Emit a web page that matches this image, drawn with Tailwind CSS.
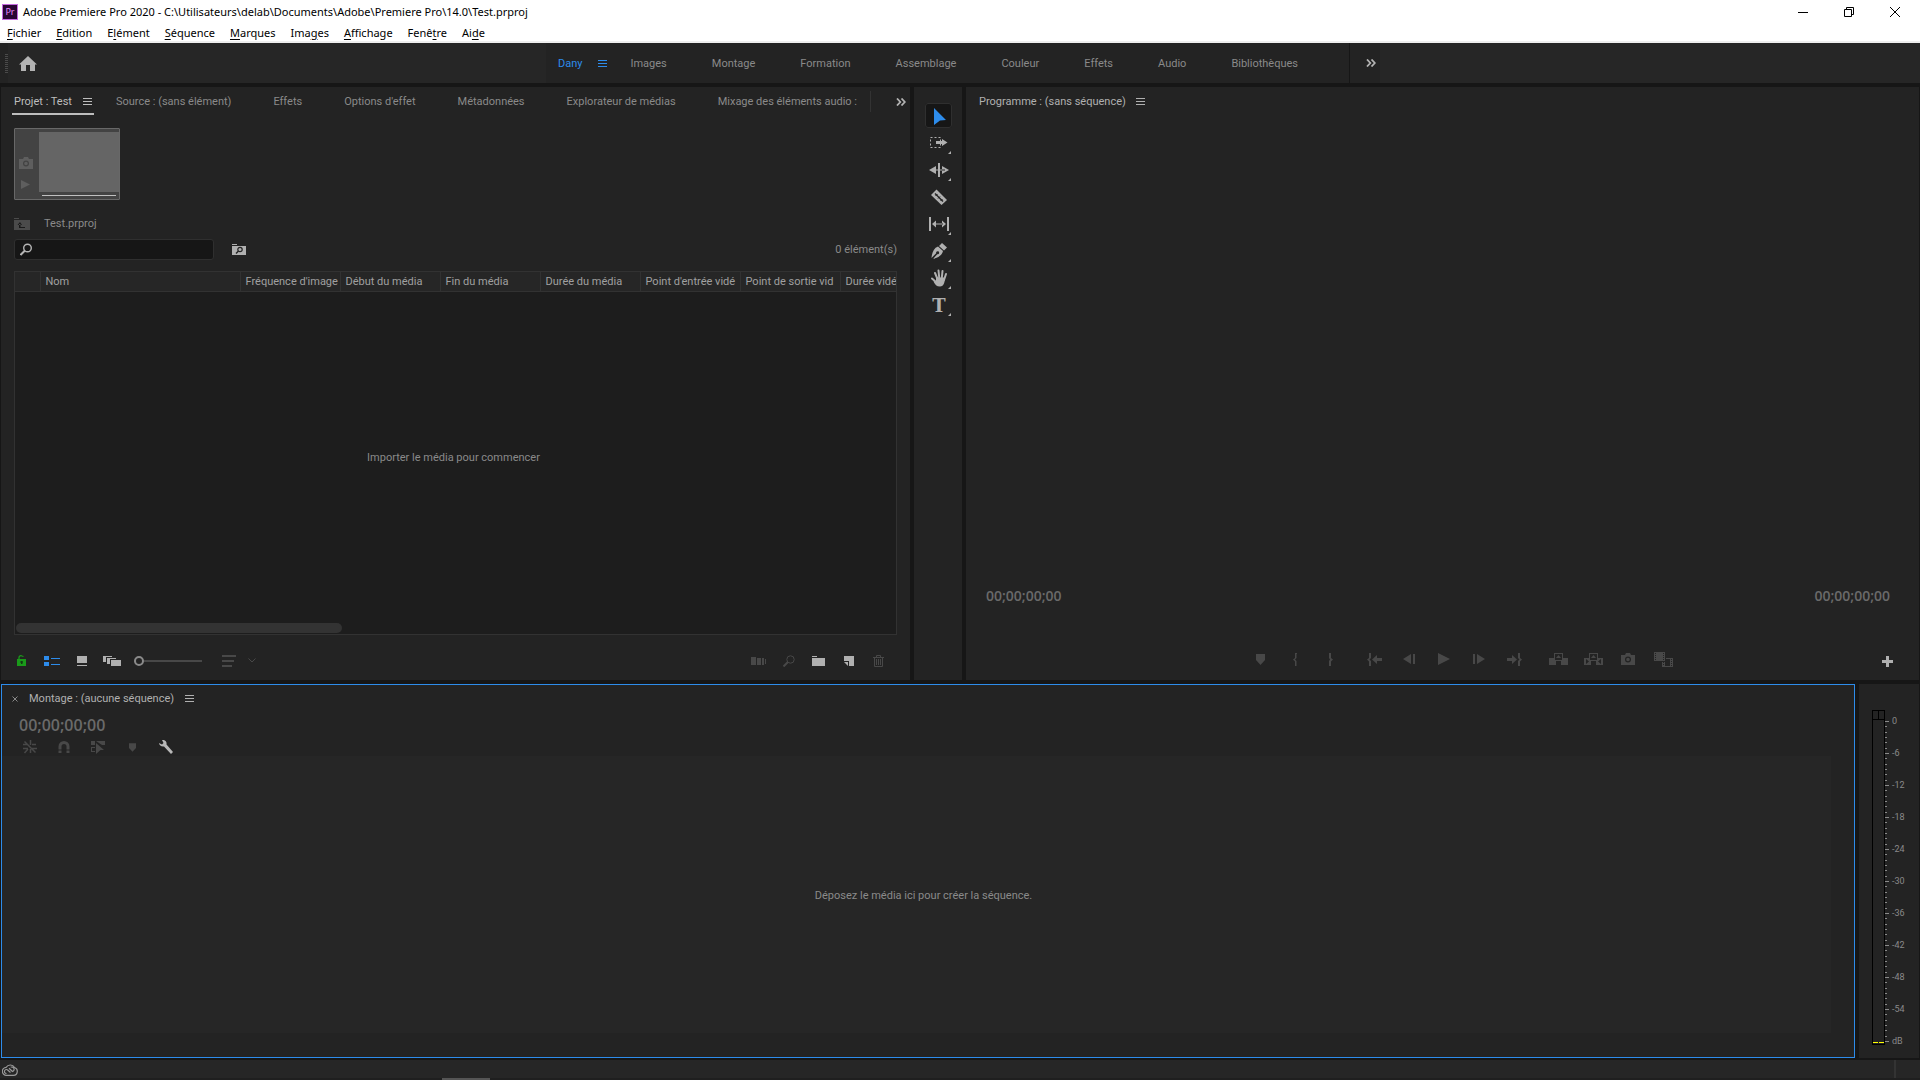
<!DOCTYPE html>
<html lang="fr">

<head>
    <meta charset="UTF-8">
    <meta name="viewport" content="width=device-width, initial-scale=1.0">
    <title>Adobe Premiere Pro 2020</title>
    <script src="https://cdn.jsdelivr.net/npm/@tailwindcss/browser@4"></script>
</head>

<body class="flex h-screen flex-col overflow-hidden bg-[#161616] font-['Roboto',sans-serif] text-[11px] leading-4 text-[#8a8a8a]">

    <!-- Symboles partagés -->
    <svg class="hidden">
        <symbol id="menu" viewBox="0 0 9 7"><path d="M0 0h9v1H0zM0 3h9v1H0zM0 6h9v1H0z" fill="currentColor" /></symbol>
        <symbol id="more" viewBox="0 0 10 8"><path d="M1 .5L4.300 4 1 7.500M5.500 .5L8.800 4 5.500 7.500" fill="none" stroke="currentColor" stroke-width="1.800" /></symbol>
        <symbol id="camera" viewBox="0 0 14 12"><path fill-rule="evenodd" d="M0 2h4l1-2h4l1 2h4v10H0zM7 3.500a3 3 0 1 0 0 6 3 3 0 0 0 0-6zm0 1.200a1.800 1.800 0 1 1 0 3.600 1.800 1.800 0 0 1 0-3.600z" fill="currentColor" /></symbol>
        <symbol id="marker" viewBox="0 0 9 11"><path d="M0 0h9v6L4.500 11 0 6z" fill="currentColor" /></symbol>
    </svg>

    <!-- Barre de titre et menus -->
    <header class="h-[43px] shrink-0 border-b-2 border-[#eeeeee] bg-white font-['Noto_Sans',sans-serif] text-black">
        <div class="flex h-[23px] items-center pl-[2px]">
            <div class="flex h-4 w-4 items-center justify-center border border-[#c56be0] bg-[#2a0634] text-[9px] leading-none text-[#e58cff]">Pr</div>
            <h1 class="ml-[5px] flex-1">Adobe Premiere Pro 2020 - C:\Utilisateurs\delab\Documents\Adobe\Premiere Pro\14.0\Test.prproj</h1>
            <div class="flex items-center pr-5">
                <button aria-label="Réduire" class="w-[46px]"><svg class="ml-auto" width="10" height="10"><path d="M0 5h10v1H0z" /></svg></button>
                <button aria-label="Restaurer" class="w-[46px]"><svg class="ml-auto" width="10" height="10" fill="none" stroke="#000"><path d="M.5 2.500h7v7h-7zM2.500 2.500v-2h7v7h-2" /></svg></button>
                <button aria-label="Fermer" class="w-[46px]"><svg class="ml-auto" width="10" height="10" stroke="#000"><path d="M0 0l10 10M10 0L0 10" /></svg></button>
            </div>
        </div>
        <nav class="flex h-[18px] items-center gap-[15px] pt-px pl-[7px] underline-offset-2">
            <button><u>F</u>ichier</button>
            <button><u>E</u>dition</button>
            <button>E<u>l</u>ément</button>
            <button><u>S</u>équence</button>
            <button><u>M</u>arques</button>
            <button>Ima<u>g</u>es</button>
            <button><u>A</u>ffichage</button>
            <button>Fenê<u>t</u>re</button>
            <button>Ai<u>d</u>e</button>
        </nav>
    </header>

    <!-- Espaces de travail -->
    <div class="flex h-10 shrink-0 bg-[#262626]">
        <div class="flex w-[546px] items-center">
            <div class="flex h-full w-2 items-center justify-end bg-[#232323]">
                <svg width="3" height="19" fill="#4a4a4a"><path d="M0 0h3v1H0zM0 2h3v1H0zM0 4h3v1H0zM0 6h3v1H0zM0 8h3v1H0zM0 10h3v1H0zM0 12h3v1H0zM0 14h3v1H0zM0 16h3v1H0zM0 18h3v1H0z" /></svg>
            </div>
            <button aria-label="Accueil" class="ml-[11px]"><svg width="18" height="15" fill="#b3b3b3"><path d="M9 0l9 8.500h-2V15h-5V9H7v6H2V8.500H0z" /></svg></button>
        </div>
        <nav class="flex w-[804px] items-center gap-[45px] border-r border-[#161616] bg-[#232323] pt-px pl-3">
            <button class="-mr-[22px] flex items-center gap-4 text-[#2d8ceb]">Dany <svg width="9" height="7"><use href="#menu" /></svg></button>
            <button>Images</button>
            <button>Montage</button>
            <button>Formation</button>
            <button>Assemblage</button>
            <button>Couleur</button>
            <button>Effets</button>
            <button>Audio</button>
            <button>Bibliothèques</button>
        </nav>
        <button aria-label="Autres espaces" class="w-[30px] bg-[#232323] pl-4 text-[#b3b3b3]"><svg width="10" height="8"><use href="#more" /></svg></button>
    </div>

    <main class="flex min-h-0 flex-1 flex-col gap-1 px-px pt-1 pb-[2px]">
        <div class="flex min-h-0 flex-[593] gap-1">

            <!-- Panneau Projet -->
            <section class="flex min-w-0 flex-[883] flex-col bg-[#232323] px-[13px]">
                <div class="flex h-[29px] items-center justify-between">
                    <div class="flex items-center gap-[42px] whitespace-nowrap">
                        <button class="-mr-5 -ml-[2px] mt-[2px] flex items-center gap-[11px] border-b-2 border-[#bdbdbd] pt-[3px] pr-[2px] pb-[3px] pl-[2px] text-[#bdbdbd]">Projet : Test <svg width="9" height="7"><use href="#menu" /></svg></button>
                        <button>Source : (sans élément)</button>
                        <button>Effets</button>
                        <button>Options d'effet</button>
                        <button>Métadonnées</button>
                        <button>Explorateur de médias</button>
                        <button>Mixage des éléments audio :</button>
                    </div>
                    <div class="-mr-[9px] flex items-center gap-[25px]">
                        <div class="h-[21px] w-px bg-[#333333]"></div>
                        <button aria-label="Autres panneaux" class="text-[#b3b3b3]"><svg width="10" height="8"><use href="#more" /></svg></button>
                    </div>
                </div>

                <!-- Aperçu -->
                <div class="mt-3 flex h-[72px] w-[106px] shrink-0 rounded-[1px] border border-[#686868] bg-[#434343] text-[#5e5e5e]">
                    <div class="flex w-6 flex-col gap-[11px] pt-7 pl-1">
                        <svg width="14" height="12"><use href="#camera" /></svg>
                        <svg class="ml-[2px]" width="9" height="9"><path d="M0 0l9 4.500L0 9z" fill="currentColor" /></svg>
                    </div>
                    <div class="flex flex-1 flex-col pt-[3px]">
                        <div class="h-[60px] bg-[#656565]"></div>
                        <div class="mx-[3px] mt-[3px] h-px bg-[#c0c0c0]"></div>
                    </div>
                </div>

                <div class="mt-4 flex h-4 shrink-0 items-center gap-[14px]">
                    <svg width="16" height="12"><path d="M0 0h5v1H0zM0 2h16v10H0z" fill="#4b4b4b" /><path d="M6 4L3.500 7H8zM5 6h1.500v3H11v1H5z" fill="#1a1a1a" /></svg>
                    <span>Test.prproj</span>
                </div>
                <div class="mt-[7px] flex h-[21px] shrink-0 items-center">
                    <label class="flex h-full w-[200px] items-center gap-1 rounded-[3px] border border-[#2f2f2f] bg-[#161616] px-[5px]">
                        <svg width="13" height="13" fill="none" stroke="#b5b5b5" stroke-width="1.400"><circle cx="7.500" cy="5" r="3.800" /><path d="M5 7.500L.5 12" stroke-width="2" /></svg>
                        <input type="text" aria-label="Rechercher" class="min-w-0 flex-1 bg-transparent text-[#b5b5b5] outline-none">
                    </label>
                    <button aria-label="Créer un chutier de recherche" class="ml-[18px]"><svg width="14" height="11"><path d="M0 0h5v1H0zM0 2h14v9H0z" fill="#b0b0b0" /><circle cx="8" cy="5.500" r="2.200" fill="none" stroke="#232323" stroke-width="1.200" /><path d="M6.500 7L4 9.500" stroke="#232323" stroke-width="1.500" /></svg></button>
                    <span class="ml-auto pt-px">0 élément(s)</span>
                </div>

                <!-- Liste des éléments -->
                <div class="mt-[11px] flex min-h-0 flex-1 flex-col overflow-hidden border border-[#323232] bg-[#1d1d1d]">
                    <table class="w-[925px] shrink-0 table-fixed border-collapse text-left text-[#a0a0a0]">
                        <thead>
                            <tr class="h-[19px] border-b border-[#323232] bg-[#262626] *:overflow-hidden *:border-r *:border-[#323232] *:pt-[2px] *:pl-[5px] *:font-normal *:whitespace-nowrap">
                                <td class="w-[25px]"></td>
                                <th scope="col" class="w-[200px]">Nom</th>
                                <th scope="col" class="w-[100px]">Fréquence d'image</th>
                                <th scope="col" class="w-[100px]">Début du média</th>
                                <th scope="col" class="w-[100px]">Fin du média</th>
                                <th scope="col" class="w-[100px]">Durée du média</th>
                                <th scope="col" class="w-[100px]">Point d'entrée vidé</th>
                                <th scope="col" class="w-[100px]">Point de sortie vid</th>
                                <th scope="col">Durée vidéo</th>
                            </tr>
                        </thead>
                    </table>
                    <div class="flex flex-1 items-center justify-center pt-[2px] pr-1">Importer le média pour commencer</div>
                    <div class="mb-px ml-px h-[10px] w-[37%] rounded-full bg-[#333333]"></div>
                </div>

                <div class="flex h-[45px] shrink-0 items-center pt-[6px] pl-[3px]">
                    <button aria-label="Verrouiller"><svg width="9" height="11"><path d="M2 4V2.500a2 2 0 0 1 3-1.500l1.500.5" fill="none" stroke="#1a9a1a" stroke-width="1.300" /><path d="M0 4h9v7H0z" fill="#1a9a1a" /><path d="M4 6h1.500v3H4zM3 6.500h3v1H3z" fill="#123a12" /></svg></button>
                    <button aria-label="Liste" class="ml-[18px]"><svg width="16" height="10" fill="#2d8ceb"><path d="M0 0h5v4H0zM0 6h5v4H0zM7 2h9v1H7zM7 8h9v1H7z" /></svg></button>
                    <button aria-label="Icônes" class="ml-[17px]"><svg width="10" height="10" fill="#b0b0b0"><path d="M0 0h10v7H0zM0 9h10v1H0z" /></svg></button>
                    <button aria-label="Forme libre" class="ml-4"><svg width="18" height="10" fill="#b0b0b0"><path d="M0 0h9v1H3v5H0zM4 2h9v1H7v5H4zM8 4h10v6H8z" /></svg></button>
                    <input type="range" min="0" max="100" value="0" aria-label="Taille des vignettes" class="ml-[13px] h-[11px] w-[68px] appearance-none bg-transparent [&::-webkit-slider-runnable-track]:h-[2px] [&::-webkit-slider-runnable-track]:bg-[#484848] [&::-webkit-slider-thumb]:-mt-1 [&::-webkit-slider-thumb]:h-[10px] [&::-webkit-slider-thumb]:w-[10px] [&::-webkit-slider-thumb]:appearance-none [&::-webkit-slider-thumb]:rounded-full [&::-webkit-slider-thumb]:border-2 [&::-webkit-slider-thumb]:border-[#8a8a8a] [&::-webkit-slider-thumb]:bg-[#232323]">
                    <button aria-label="Trier" class="ml-5 flex items-center gap-3"><svg width="14" height="12" fill="#484848"><path d="M0 0h14v2H0zM0 5h12v2H0zM0 10h10v2H0z" /></svg><svg width="8" height="5" fill="none" stroke="#484848"><path d="M.5 .5L4 4 7.500 .5" /></svg></button>
                    <div class="ml-auto flex items-center pr-[13px]">
                        <button aria-label="Automatiser"><svg width="15" height="8" fill="#484848"><path d="M0 0h5v8H0zM6 1h4v7H6zM11 1h2v7h-2zM14 2h1v5h-1z" /></svg></button>
                        <button aria-label="Rechercher" class="ml-[17px]"><svg width="12" height="12" fill="none" stroke="#484848"><circle cx="7.500" cy="4.500" r="3.700" /><path d="M5 7L.5 11.500" stroke-width="2" /></svg></button>
                        <button aria-label="Nouveau chutier" class="ml-[17px]"><svg width="13" height="10" fill="#b0b0b0"><path d="M0 0h5v1H0zM0 2h13v8H0z" /></svg></button>
                        <button aria-label="Nouvel élément" class="ml-[19px]"><svg width="10" height="10" fill="#b0b0b0"><path d="M0 0h10v10H5V5H0zM0 6h4v4z" /></svg></button>
                        <button aria-label="Supprimer" class="ml-[19px]"><svg width="11" height="12" fill="none" stroke="#484848"><path d="M0 2.500h11M3.500 2V.5h4V2M1.500 3v8.500h8V3M3.500 4v6M5.500 4v6M7.500 4v6" /></svg></button>
                    </div>
                </div>
            </section>

            <!-- Outils -->
            <section class="flex w-12 shrink-0 flex-col items-center gap-[2px] bg-[#232323] pt-4 text-[#b0b0b0]">
                <button aria-label="Sélection" class="rounded-[3px] bg-[#161616] outline -outline-offset-1 outline-[#2f2f2f]"><svg width="27" height="25"><path d="M9 5l12 12-6 .5L9 22z" fill="#2d8ceb" /></svg></button>
                <button aria-label="Sélection de piste en amont"><svg width="27" height="25" fill="currentColor"><path d="M5.500 7.500h10v10h-10z" fill="none" stroke="currentColor" stroke-dasharray="2 2" /><path d="M11 11h6V9l5.500 3.500L17 16v-2h-6z" /><path d="M26 21v3h-3z" /></svg></button>
                <button aria-label="Propagation"><svg width="27" height="25" fill="currentColor"><path d="M13 6h2v14h-2zM4 13l7-4v8zM24 13l-7-4v8zM8 12.500h12v1H8z" /><path d="M26 21v3h-3z" /></svg></button>
                <button aria-label="Cutter"><svg width="27" height="25" fill="currentColor"><path d="M11.500 5.500L22 16l-5.500 5L6 11z" /><path d="M10 9.500l8 8" stroke="#232323" stroke-width="1.400" /><path d="M10.500 12l2-2M13 14.500l2-2M15.500 17l2-2" stroke="#232323" /></svg></button>
                <button aria-label="Déplacer dessous"><svg width="27" height="25" fill="currentColor"><path d="M4 6h2v14H4zM22 6h2v14h-2zM7 13l4-3.500v7zM21 13l-4-3.500v7zM10 12.500h8v1h-8z" /><path d="M26 21v3h-3z" /></svg></button>
                <button aria-label="Plume"><svg width="27" height="25" fill="currentColor"><path d="M17 5l5 4.500-3 3L14 8zM13 8.500l5 4.500c-1 4-4 6.500-10 8l4.200-4.800a1.500 1.500 0 1 0-1-1L6.500 20C7 14 9 10 13 8.500z" /><path d="M26 21v3h-3z" /></svg></button>
                <button aria-label="Main"><svg width="27" height="25"><path d="M10 8l2.500 6M13.500 5.500l.8 8M17.500 6l-.8 8M21 9l-2 6M7 13.500l4 3.500" fill="none" stroke="currentColor" stroke-width="2" stroke-linecap="round" /><path d="M11 12.500h9c0 4-1 9-5 9-3.500 0-5-2-6.500-5l2.500-.5z" fill="currentColor" /><path d="M26 21v3h-3z" fill="currentColor" /></svg></button>
                <button aria-label="Texte"><svg width="27" height="25" fill="currentColor"><text x="14" y="20" text-anchor="middle" class="font-['DejaVu_Serif',serif] text-[18px] font-bold">T</text><path d="M26 21v3h-3z" /></svg></button>
            </section>

            <!-- Moniteur du programme -->
            <section class="flex min-w-0 flex-[953] flex-col bg-[#232323]">
                <div class="flex h-[29px] items-center pl-[13px]">
                    <button class="flex items-center gap-[10px] text-[#b0b0b0]">Programme : (sans séquence) <svg width="9" height="7"><use href="#menu" /></svg></button>
                </div>
                <div class="flex-1"></div>
                <div class="flex h-5 items-center justify-between pr-[29px] pl-5 font-['Open_Sans',sans-serif] text-[14px] font-semibold text-[#6a6a6a]">
                    <span>00;00;00;00</span>
                    <span>00;00;00;00</span>
                </div>
                <div class="mt-[41px] mb-[9px] flex h-[24px] items-center pr-[26px] text-[#484848]">
                    <div class="flex flex-1 justify-center gap-[9px] pl-[76px] *:flex *:items-center [&_button]:flex [&_button]:h-6 [&_button]:w-[35px] [&_button]:items-center [&_button]:justify-center [&_svg]:fill-current">
                        <div>
                            <button aria-label="Ajouter un marqueur"><svg width="9" height="11"><use href="#marker" /></svg></button>
                            <button aria-label="Point d'entrée"><svg width="5" height="13"><path d="M2 0h2v1H3.500v4L2 6.500 3.500 8v5H2V8.500L0 6.500 2 5z" /></svg></button>
                            <button aria-label="Point de sortie"><svg width="5" height="13"><path d="M3 0H1v5l1 1.500L1 8v5h2V8.500l2-2L3 5z" /></svg></button>
                        </div>
                        <div>
                            <button aria-label="Aller au point d'entrée"><svg width="15" height="13"><path d="M2 0h2v5L2.500 6.500 4 8v5H2V8.500L0 6.500 2 5zM5 6.500L10 2v3h5v3h-5v3z" /></svg></button>
                            <button aria-label="Image précédente"><svg width="12" height="10"><path d="M8 0v10L0 5zM10 0h2v10h-2z" /></svg></button>
                            <button aria-label="Lecture"><svg width="12" height="12"><path d="M0 0l12 6-12 6z" /></svg></button>
                            <button aria-label="Image suivante"><svg width="12" height="10"><path d="M4 0v10l8-5zM0 0h2v10H0z" /></svg></button>
                            <button aria-label="Aller au point de sortie"><svg width="15" height="13"><path d="M13 0h-2v5l1.500 1.500L11 8v5h2V8.500l2-2L13 5zM10 6.500L5 2v3H0v3h5v3z" /></svg></button>
                        </div>
                        <div>
                            <button aria-label="Prélever"><svg width="19" height="12"><path fill-rule="evenodd" d="M0 5h5V0h9v5h5v7h-7V8H7v4H0zM6 1v6h7V1z" /><path d="M9.500 2L12 5H7z" /></svg></button>
                            <button aria-label="Extraire"><svg width="19" height="12"><path fill-rule="evenodd" d="M0 5h5V0h9v5h5v7h-7V8H7v4H0zM6 1v6h7V1zM2 6v5l3-2.500zM17 6v5l-3-2.500z" /><path d="M9.500 2L12 5H7z" /></svg></button>
                            <button aria-label="Exporter une image"><svg width="14" height="12"><use href="#camera" /></svg></button>
                            <button aria-label="Comparer"><svg width="19" height="15"><path fill-rule="evenodd" d="M0 0h11v9H0zM1 1h1v1H1zM1 3h1v1H1zM1 5h1v1H1zM1 7h1v1H1zM9 1h1v1H9zM9 3h1v1H9zM9 5h1v1H9zM9 7h1v1H9zM12 6h7v9H8v-5h1v1h1v-1h1v4h5V7h-4zM17 7h1v1h-1zM17 9h1v1h-1zM17 11h1v1h-1zM17 13h1v1h-1zM9 12h1v1H9z" /></svg></button>
                        </div>
                    </div>
                    <button aria-label="Éditeur de boutons" class="text-[#b0b0b0]"><svg class="mt-1" width="12" height="11" fill="currentColor"><path d="M5 0h3v4h4v3H8v4H5V7H1V4h4z" /></svg></button>
                </div>
            </section>
        </div>

        <div class="flex min-h-0 flex-[374] gap-1">

            <!-- Montage -->
            <section class="flex min-w-0 flex-1 flex-col border border-[#2d8ceb] bg-[#232323]">
                <div class="flex h-[27px] shrink-0 items-center pl-[10px]">
                    <button aria-label="Fermer le panneau"><svg width="6" height="6" stroke="#8a8a8a"><path d="M.5 .5l5 5M5.500 .5l-5 5" /></svg></button>
                    <button class="ml-[11px] flex items-center gap-[11px] text-[#b0b0b0]">Montage : (aucune séquence) <svg width="9" height="7"><use href="#menu" /></svg></button>
                </div>
                <div class="h-[26px] shrink-0 pl-[17px] font-['Open_Sans',sans-serif] text-base leading-[26px] font-semibold text-[#6a6a6a]">00;00;00;00</div>
                <div class="flex h-[18px] shrink-0 items-center pl-[21px] text-[#484848]">
                    <button aria-label="Imbrication"><svg width="14" height="14" fill="none" stroke="currentColor" stroke-width="1.500"><path d="M7.500 0v5M0 4.500h4M9 4.500h4M0 8.500h5M9 8.500h5M7.500 9v4M1.500 1.500l11 11M5 9l-3.500 4" /></svg></button>
                    <button aria-label="Aligner" class="ml-[21px]"><svg width="12" height="12" fill="none" stroke="currentColor" stroke-width="3"><path d="M2 12V5.500a4 4 0 0 1 8 0V12" /><path d="M0 9h12" stroke="#232323" stroke-width="1" /></svg></button>
                    <button aria-label="Sélection liée" class="ml-[21px]"><svg width="14" height="14" fill="currentColor"><path d="M0 1h4v4H0zM5 1h9v4h-3L5 1zM0 7h4v1H1v3h3v1H0z" /><path d="M5 3l8 7H9.500L5 14z" /></svg></button>
                    <button aria-label="Ajouter un marqueur" class="ml-6"><svg width="7" height="9"><use href="#marker" /></svg></button>
                    <button aria-label="Paramètres d'affichage" class="ml-[23px]"><svg width="14" height="14" fill="#b8b8b8"><path d="M3 0c3-.5 5 1.500 4.500 4.500L14 12l-2 2-7-7.500C2.500 7 .3 5.500 0 3l3 1.500L4.500 3z" /></svg></button>
                </div>
                <div class="mr-[23px] mb-6 flex flex-1 items-center justify-center bg-[#262626] pt-[2px] pl-[14px]">Déposez le média ici pour créer la séquence.</div>
            </section>

            <!-- Mesures audio -->
            <section class="flex w-[60px] shrink-0 items-start bg-[#232323] pl-[13px]">
                <div class="mt-[26px] flex h-[335px] w-[13px] flex-col border border-black">
                    <div class="flex h-[9px] border-b border-black">
                        <div class="w-[6px] border-r border-black"></div>
                    </div>
                    <div class="flex flex-1 items-end gap-px pb-px">
                        <div class="h-px flex-1 bg-[#ffff00]"></div>
                        <div class="h-px flex-1 bg-[#ffff00]"></div>
                    </div>
                </div>
                <svg class="mt-[37px]" width="4" height="321">
                    <pattern id="ticks" width="4" height="32" patternUnits="userSpaceOnUse"><path d="M0 0h4v1H0zM0 5h2v1H0zM0 11h2v1H0zM0 16h2v1H0zM0 21h2v1H0zM0 27h2v1H0z" fill="#8a8a8a" /></pattern>
                    <rect width="4" height="321" fill="url(#ticks)" />
                </svg>
                <div class="mt-[21px] ml-[3px] text-[9px] leading-8">
                    <div>0</div>
                    <div>-6</div>
                    <div>-12</div>
                    <div>-18</div>
                    <div>-24</div>
                    <div>-30</div>
                    <div>-36</div>
                    <div>-42</div>
                    <div>-48</div>
                    <div>-54</div>
                    <div>dB</div>
                </div>
            </section>
        </div>
    </main>

    <!-- Barre d'état -->
    <footer class="shrink-0 bg-[#262626]">
        <div class="flex h-[18px] items-center justify-between pr-6 pl-[2px]">
            <svg width="16" height="13" fill="none" stroke="#999999" stroke-width="1.200"><path d="M4.500 12.300h7a4 4 0 0 0 1-7.800A4.800 4.800 0 0 0 4.200 4.300a4 4 0 0 0 .3 8z" /><path d="M8.500 9.500L6 7.300a2 2 0 1 0-1.500 3.200M7 5.200L10.500 8.500a2.300 2.300 0 1 0-1.800-4.200" /></svg>
            <div class="h-full w-[2px] bg-[#333333]"></div>
        </div>
        <div class="h-[2px] bg-[#1f1f1f] pl-[23%]">
            <div class="h-full w-12 bg-[#555555]"></div>
        </div>
    </footer>
</body>

</html>
